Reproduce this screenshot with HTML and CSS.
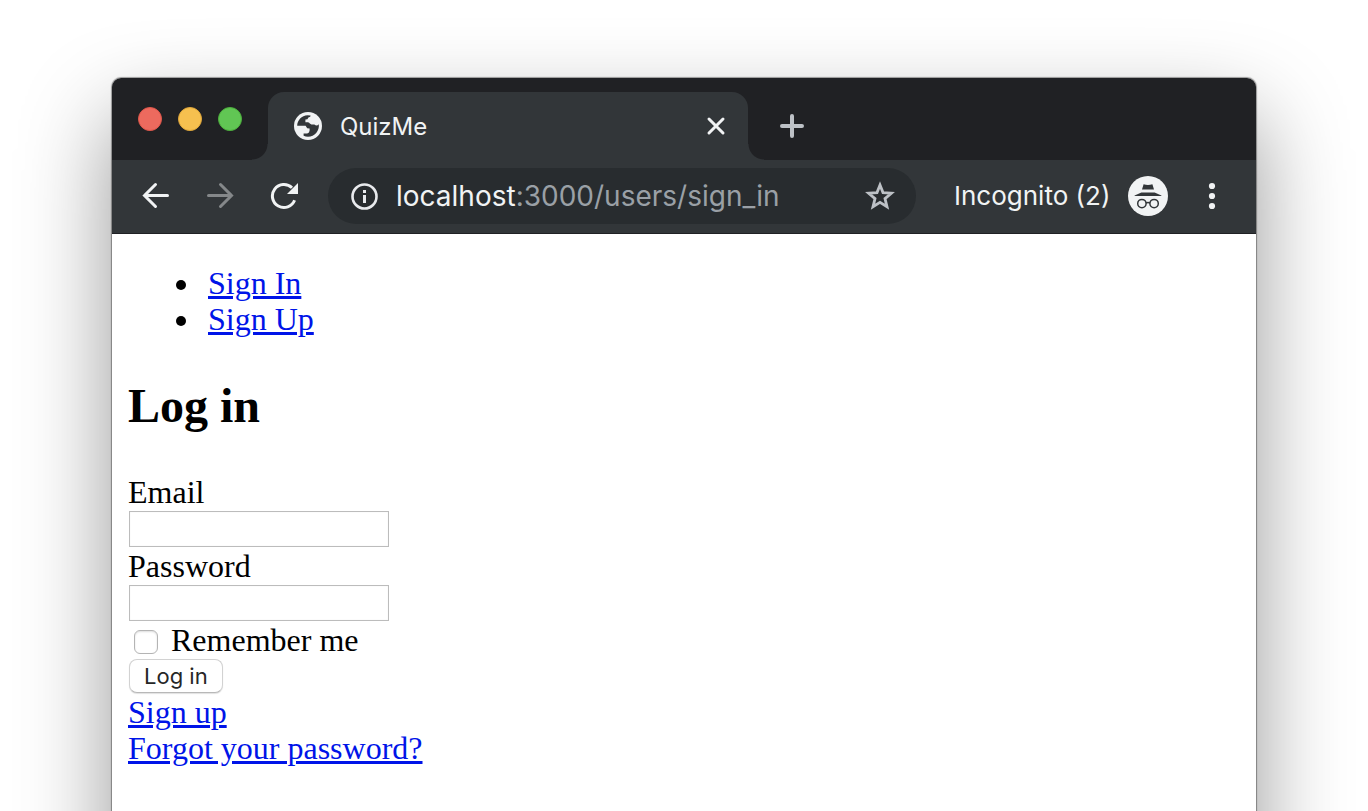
FILE: index.html
```html
<!DOCTYPE html>
<html lang="en">
<head>
<meta charset="utf-8">
<title>QuizMe</title>
<link rel="stylesheet" href="styles.css">
</head>
<body>
<div class="desktop">
  <div class="window">
    <header class="tabstrip">
      <div class="lights">
        <button class="light light-close" aria-label="Close window"></button>
        <button class="light light-min" aria-label="Minimize window"></button>
        <button class="light light-max" aria-label="Zoom window"></button>
      </div>
      <div class="tab">
        <svg class="favicon" viewBox="0 0 28 28" aria-hidden="true">
          <circle cx="14" cy="14" r="14" fill="#f1f3f4"/>
          <path fill="#323639" d="M3.2 13.8C3.2 8.2 7.6 3.6 13.6 3.2L16.6 3.6L16.2 4.8Q14 5.2 13.4 7.2L11.4 7.6V10.2H14Q15.4 10.4 15.8 11.6L17.4 12.6H20.4Q22.8 14.6 24.8 12.2C25.6 18.6 20.8 24.8 14 24.8Q11.6 24.8 9.6 23.8V21.4H13.2Q15.6 21 15.6 18.6V16.6L13.2 16.2L11.6 13.8Z"/>
        </svg>
        <span class="tab-title">QuizMe</span>
        <button class="tab-close" aria-label="Close tab">
          <svg width="20" height="20" viewBox="0 0 20 20"><path d="M3 3L17 17M17 3L3 17" stroke="#f1f3f4" stroke-width="3" stroke-linecap="round"/></svg>
        </button>
      </div>
      <button class="new-tab" aria-label="New tab">
        <svg width="24" height="24" viewBox="0 0 24 24"><path d="M12 2V22M2 12H22" stroke="#bdc1c6" stroke-width="4" stroke-linecap="round"/></svg>
      </button>
    </header>
    <nav class="toolbar" aria-label="Browser">
      <div class="nav-buttons">
        <button class="tool" aria-label="Back">
          <svg width="28" height="28" viewBox="0 0 28 28" fill="none" stroke="#f1f3f4" stroke-width="3" stroke-linecap="round"><path d="M25.5 13.5H2.5M13.5 2.5L2.5 13.5L13.5 24.5"/></svg>
        </button>
        <button class="tool" aria-label="Forward" disabled>
          <svg width="28" height="28" viewBox="0 0 28 28" fill="none" stroke="#85888a" stroke-width="3" stroke-linecap="round"><path d="M2.5 13.5H25.5M14.5 2.5L25.5 13.5L14.5 24.5"/></svg>
        </button>
        <button class="tool" aria-label="Reload">
          <svg width="28" height="28" viewBox="0 0 28 28"><path d="M24.6 18.2A11.5 11.5 0 1 1 22 5.8" fill="none" stroke="#f1f3f4" stroke-width="3"/><path d="M28 1V12H17Z" fill="#f1f3f4"/></svg>
        </button>
      </div>
      <div class="omnibox">
        <svg width="28" height="28" viewBox="0 0 28 28"><circle cx="14.5" cy="14.5" r="12" fill="none" stroke="#e8eaed" stroke-width="2.6"/><path d="M13 8h3v3h-3zM13 13h3v8h-3z" fill="#e8eaed"/></svg>
        <span class="url"><span class="host">localhost</span>:3000/users/sign_in</span>
        <button class="star" aria-label="Bookmark this page">
          <svg width="30" height="30" viewBox="0 0 30 30"><path d="M15 4L18 11.6L26.4 12.2L20 17.6L22 25.8L15 21.4L8 25.8L10 17.6L3.6 12.2L12 11.6Z" fill="none" stroke="#bdc1c6" stroke-width="2.8"/></svg>
        </button>
      </div>
      <button class="profile">
        <span>Incognito (2)</span>
        <svg width="40" height="40" viewBox="0 0 40 40"><circle cx="20" cy="20" r="20" fill="#f1f3f4"/><g fill="#323639"><path d="M15.6 8.2Q20 9.8 24.4 8.2L26 13.4H14Z"/><path d="M13.4 16.4H26.6L33.4 19.4V20H6.6V19.4Z"/></g><g fill="none" stroke="#323639" stroke-width="1.5"><circle cx="13.9" cy="27.6" r="4.2"/><circle cx="26.1" cy="27.6" r="4.2"/><path d="M18 27Q20 25.8 22 27"/></g></svg>
      </button>
      <button class="tool" aria-label="Menu">
        <svg width="28" height="28" viewBox="0 0 28 28" fill="#f1f3f4"><circle cx="14" cy="4" r="3.1"/><circle cx="14" cy="14" r="3.1"/><circle cx="14" cy="24" r="3.1"/></svg>
      </button>
    </nav>
    <main class="page">
      <ul class="menu">
        <li><a href="#sign-in">Sign In</a></li>
        <li><a href="#sign-up">Sign Up</a></li>
      </ul>
      <h2 class="heading">Log in</h2>
      <form>
        <div class="field">
          <label for="email">Email</label>
          <input class="textbox" id="email" type="email">
        </div>
        <div class="field">
          <label for="password">Password</label>
          <input class="textbox" id="password" type="password">
        </div>
        <div class="remember">
          <input class="checkbox" id="remember" type="checkbox">
          <label for="remember">Remember me</label>
        </div>
        <div class="actions"><button class="submit" type="submit">Log in</button></div>
      </form>
      <div class="links">
        <a href="#sign-up">Sign up</a>
        <a href="#forgot">Forgot your password?</a>
      </div>
    </main>
  </div>
</div>
</body>
</html>
```
FILE: styles.css
```css
* {
  box-sizing: border-box;
}

body {
  margin: 0;
  background: #fff;
}

button {
  border: 0;
  padding: 0;
  background: none;
  font: inherit;
  color: inherit;
}

svg {
  display: block;
  flex: none;
}

.desktop {
  height: 100vh;
  padding: 78px 112px 0;
  overflow: hidden;
}

.window {
  min-height: 120vh;
  border-radius: 9px 9px 0 0;
  background: #fff;
  box-shadow: 0 0 1px 1px rgba(0, 0, 0, 0.36), 0 40px 90px rgba(0, 0, 0, 0.42);
  font-family: Inter, "Liberation Sans", sans-serif;
}

.tabstrip {
  display: flex;
  height: 82px;
  padding: 14px 26px 0;
  border-radius: 9px 9px 0 0;
  background: #202124;
}

.lights {
  display: flex;
  gap: 16px;
  margin-top: 15px;
}

.light {
  width: 24px;
  height: 24px;
  border-radius: 50%;
}

.light-close {
  background: #ed6a5e;
  border: 1px solid #e0564a;
}

.light-min {
  background: #f6c04f;
  border: 1px solid #e0a73a;
}

.light-max {
  background: #61c654;
  border: 1px solid #4cb03c;
}

.tab {
  position: relative;
  display: flex;
  align-items: center;
  width: 480px;
  height: 68px;
  margin-left: 26px;
  padding: 0 22px 0 26px;
  border-radius: 16px 16px 0 0;
  background: #323639;
  color: #f1f3f4;
  font-size: 24px;
}

/* Curved feet that join the tab to the toolbar */
.tab::before,
.tab::after {
  content: "";
  position: absolute;
  bottom: 0;
  width: 16px;
  height: 16px;
}

.tab::before {
  right: 100%;
  background: radial-gradient(circle at 0 0, #202124 15px, #323639 16px);
}

.tab::after {
  left: 100%;
  background: radial-gradient(circle at 100% 0, #202124 15px, #323639 16px);
}

.favicon {
  width: 28px;
  height: 28px;
}

.tab-title {
  flex: 1;
  margin-left: 18px;
}

.new-tab {
  align-self: center;
  margin-left: 32px;
}

.toolbar {
  display: flex;
  align-items: center;
  height: 74px;
  padding: 0 16px 2px;
  border-bottom: 1px solid #202124;
  background: #323639;
  color: #f1f3f4;
}

.nav-buttons {
  display: flex;
  gap: 8px;
}

.tool {
  display: grid;
  place-items: center;
  width: 56px;
  height: 56px;
}

.omnibox {
  display: flex;
  flex: 1;
  align-items: center;
  height: 56px;
  margin: 0 38px 0 16px;
  padding: 0 21px 0 22px;
  border-radius: 28px;
  background: #282c2f;
  color: #9aa0a6;
  font-size: 28px;
}

.url {
  flex: 1;
  margin-left: 18px;
}

.host {
  color: #f1f3f4;
}

.profile {
  display: flex;
  align-items: center;
  justify-content: space-between;
  min-width: 214px;
  margin-right: 16px;
  font-size: 26px;
  white-space: nowrap;
}

.page {
  padding: 31px 16px;
  color: #000;
  font: 32px/36px "Liberation Serif", serif;
}

.page a {
  color: #0014e8;
}

.menu {
  margin: 0;
  padding-left: 74px;
}

.menu li {
  padding-left: 6px;
}

.heading {
  margin: 40px 0;
  font-size: 48px;
  line-height: 58px;
}

.field {
  display: flex;
  flex-direction: column;
  align-items: flex-start;
}

.field label {
  line-height: 34px;
}

.textbox {
  width: 260px;
  height: 36px;
  margin: 2px 1px;
  padding: 2px 4px;
  border: 1px solid #bcbcbc;
  border-radius: 0;
  background: #fff;
  box-shadow: inset 0 0 1px #ddd;
  font: 22px Inter, sans-serif;
}

.remember {
  display: flex;
  align-items: center;
  line-height: 34px;
}

.checkbox {
  appearance: none;
  width: 24px;
  height: 24px;
  margin: 4px 13px 0 6px;
  border: 1px solid #b4b4b4;
  border-radius: 6px;
  background: #fff;
  box-shadow: inset 0 1px 2px #ddd;
}

.actions {
  padding: 2px 1px 1px;
}

.submit {
  display: block;
  height: 34px;
  padding: 0 14px;
  border: 1px solid #d2d2d2;
  border-bottom-color: #b8b8b8;
  border-radius: 8px;
  background: #fff;
  box-shadow: 0 1px 1px rgba(0, 0, 0, 0.12);
  color: #262626;
  font: 22px Inter, sans-serif;
}

.links {
  display: flex;
  flex-direction: column;
  align-items: flex-start;
}
```
